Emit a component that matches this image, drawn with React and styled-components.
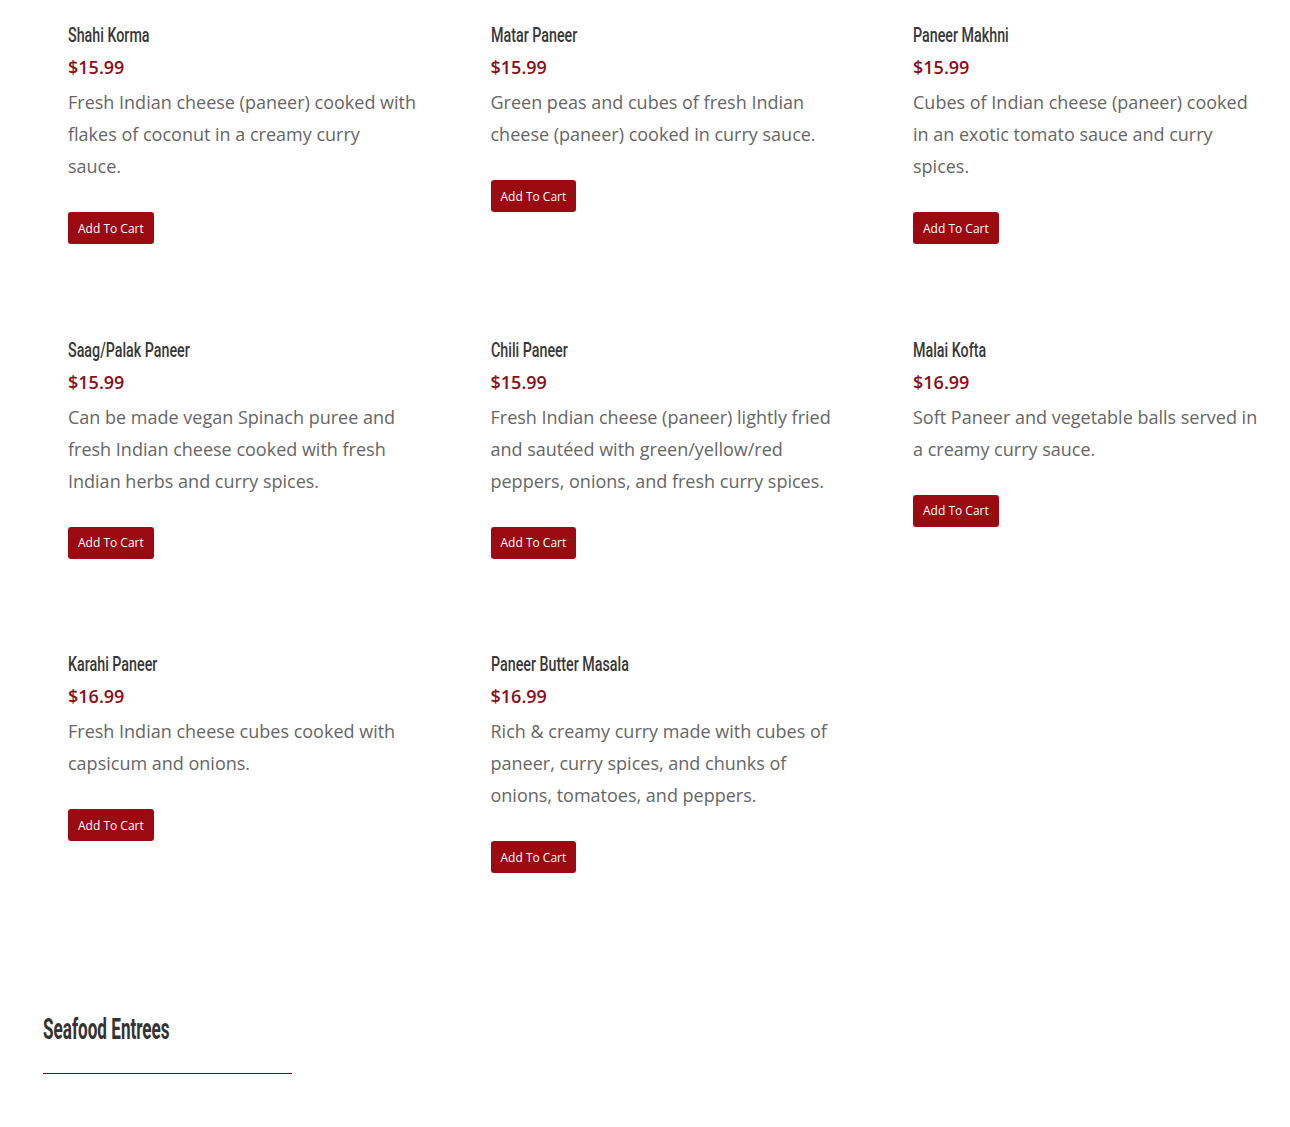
import React from 'react'
import styled, { createGlobalStyle } from 'styled-components'

const GlobalStyle = createGlobalStyle`
    body {
        margin: 0;
        background: #fff;
        overflow-x: hidden;
    }
`;

const Page = styled.div`
    padding: 19px 0 60px 43px;
    font-family: "Open Sans", sans-serif;
`;

const Grid = styled.div`
    display: grid;
    grid-template-columns: repeat(3, 400px);
    column-gap: 22.5px;
    row-gap: 89.5px;
    align-items: start;
`;

const Card = styled.div`
    display: flex;
    flex-direction: column;
    align-items: flex-start;
    padding-left: 25px;
    width: 348.5px;
`;

// condensed display face, squeezed from Roboto
const Title = styled.div`
    font-family: Roboto, "Liberation Sans", sans-serif;
    font-weight: 500;
    font-size: 21px;
    line-height: 32px;
    color: #383838;
    white-space: nowrap;
    transform: scaleX(0.68);
    transform-origin: left center;
`;

const Price = styled.div`
    font-size: 18px;
    line-height: 32px;
    font-weight: 600;
    color: #8b0e16;
    margin-bottom: 3px;
`;

const Description = styled.div`
    font-size: 18px;
    line-height: 32px;
    color: #666;
`;

const Button = styled.button`
    margin-top: 30px;
    height: 32px;
    padding: 0 10px;
    border: none;
    border-radius: 3px;
    background: #9b0a10;
    color: #fff;
    font-family: "Open Sans", sans-serif;
    font-size: 12px;
    cursor: pointer;
`;

const Section = styled.div`
    margin-top: 136px;
`;

const SectionTitle = styled.h2`
    margin: 0;
    font-family: Roboto, "Liberation Sans", sans-serif;
    font-size: 29px;
    line-height: 40px;
    font-weight: 700;
    color: #333;
    white-space: nowrap;
    transform: scaleX(0.59);
    transform-origin: left center;
`;

const Rule = styled.div`
    margin-top: 24px;
    width: 249px;
    height: 1px;
    background: #6b0f1a;
`;

const items = [
    { title: 'Shahi Korma', price: '$15.99', text: 'Fresh Indian cheese (paneer) cooked with flakes of coconut in a creamy curry sauce.' },
    { title: 'Matar Paneer', price: '$15.99', text: 'Green peas and cubes of fresh Indian cheese (paneer) cooked in curry sauce.' },
    { title: 'Paneer Makhni', price: '$15.99', text: 'Cubes of Indian cheese (paneer) cooked in an exotic tomato sauce and curry spices.' },
    { title: 'Saag/Palak Paneer', price: '$15.99', text: 'Can be made vegan Spinach puree and fresh Indian cheese cooked with fresh Indian herbs and curry spices.' },
    { title: 'Chili Paneer', price: '$15.99', text: 'Fresh Indian cheese (paneer) lightly fried and sautéed with green/yellow/red peppers, onions, and fresh curry spices.' },
    { title: 'Malai Kofta', price: '$16.99', text: 'Soft Paneer and vegetable balls served in a creamy curry sauce.' },
    { title: 'Karahi Paneer', price: '$16.99', text: 'Fresh Indian cheese cubes cooked with capsicum and onions.' },
    { title: 'Paneer Butter Masala', price: '$16.99', text: 'Rich & creamy curry made with cubes of paneer, curry spices, and chunks of onions, tomatoes, and peppers.' },
];

const App = () => {
    return (
        <Page>
            <GlobalStyle />
            <Grid>
                {items.map(item => (
                    <Card key={item.title}>
                        <Title>{item.title}</Title>
                        <Price>{item.price}</Price>
                        <Description>{item.text}</Description>
                        <Button>Add To Cart</Button>
                    </Card>
                ))}
            </Grid>
            <Section>
                <SectionTitle>Seafood Entrees</SectionTitle>
                <Rule />
            </Section>
        </Page>
    )
}

export default App
